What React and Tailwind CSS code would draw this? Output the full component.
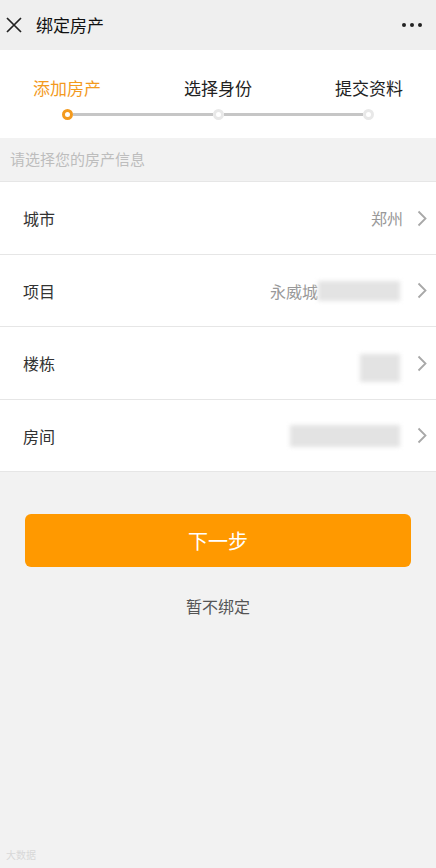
const font = { fontFamily: '"Noto Sans CJK SC", "Noto Sans", sans-serif' };

function Step({ label, active }) {
  return (
    <div className="flex flex-col items-center w-[150px]">
      <span className={`text-[17px] leading-none ${active ? 'text-[#f39a1e]' : 'text-[#222]'}`}>{label}</span>
    </div>
  );
}

function Chevron() {
  return (
    <svg width="10" height="17" viewBox="0 0 10 17" className="shrink-0">
      <polyline points="1.5,1.5 8.5,8.5 1.5,15.5" fill="none" stroke="#a8a8a8" strokeWidth="1.8" />
    </svg>
  );
}

function Row({ label, tall, children }) {
  return (
    <div className={`${tall ? 'h-[73px]' : 'h-[72px]'} flex items-center justify-between pl-[23px] pr-[9px] border-b border-[#e6e6e6]`}>
      <span className="text-[16px] text-[#333]">{label}</span>
      <div className="flex items-center gap-[17px]">
        {children}
        <Chevron />
      </div>
    </div>
  );
}

function Blur({ w, h, className = '' }) {
  return <div className={`bg-[#e3e3e3] blur-[2px] ${className}`} style={{ width: w, height: h }} />;
}

export default function App() {
  return (
    <div style={font} className="w-[436px] h-[868px] bg-[#f2f2f2] flex flex-col">
      <div className="h-[50px] flex items-center px-[6px] bg-[#efefef]">
        <svg width="16" height="16" viewBox="0 0 16 16" className="shrink-0">
          <path d="M1 1 L15 15 M15 1 L1 15" stroke="#222" strokeWidth="1.7" fill="none" />
        </svg>
        <span className="ml-[14px] text-[17px] text-[#111]">绑定房产</span>
        <div className="flex-1" />
        <div className="flex gap-[4px] mr-[8px]">
          <span className="w-[4px] h-[4px] rounded-full bg-[#222]" />
          <span className="w-[4px] h-[4px] rounded-full bg-[#222]" />
          <span className="w-[4px] h-[4px] rounded-full bg-[#222]" />
        </div>
      </div>

      <div className="h-[88px] bg-white flex flex-col pt-[29px]">
        <div className="flex justify-between ml-[-8px] mr-[-8px]">
          <Step label="添加房产" active />
          <Step label="选择身份" />
          <Step label="提交资料" />
        </div>
        <div className="flex items-center mt-[13px] ml-[62px] w-[312px]">
          <span className="w-[11px] h-[11px] rounded-full border-[3px] border-[#f39a1e] bg-white shrink-0" />
          <span className="flex-1 h-[3px] bg-[#c6c6c6]" />
          <span className="w-[11px] h-[11px] rounded-full border-[3px] border-[#e8e8e8] bg-white shrink-0" />
          <span className="flex-1 h-[3px] bg-[#c6c6c6]" />
          <span className="w-[11px] h-[11px] rounded-full border-[3px] border-[#e8e8e8] bg-white shrink-0" />
        </div>
      </div>

      <div className="h-[43px] flex items-center px-[10px] text-[15px] text-[#bdbdbd]">请选择您的房产信息</div>

      <div className="bg-white border-t border-[#e6e6e6]">
        <Row label="城市" tall>
          <span className="text-[16px] text-[#999] mr-[-3px]">郑州</span>
        </Row>
        <Row label="项目">
          <div className="flex items-center">
            <span className="text-[16px] text-[#999]">永威城</span>
            <Blur w={82} h={20} />
          </div>
        </Row>
        <Row label="楼栋" tall>
          <Blur w={40} h={28} className="mt-[10px]" />
        </Row>
        <Row label="房间">
          <Blur w={110} h={22} />
        </Row>
      </div>

      <div className="px-[25px] mt-[42px]">
        <button className="w-full h-[53px] rounded-[6px] bg-[#ff9900] text-white text-[20px]">下一步</button>
      </div>
      <div className="text-center mt-[27px] text-[16px] text-[#555]">暂不绑定</div>

      <div className="flex-1" />
      <div className="px-[6px] pb-[6px] text-[10px] text-[#d8d8d8]">大数据</div>
    </div>
  );
}
